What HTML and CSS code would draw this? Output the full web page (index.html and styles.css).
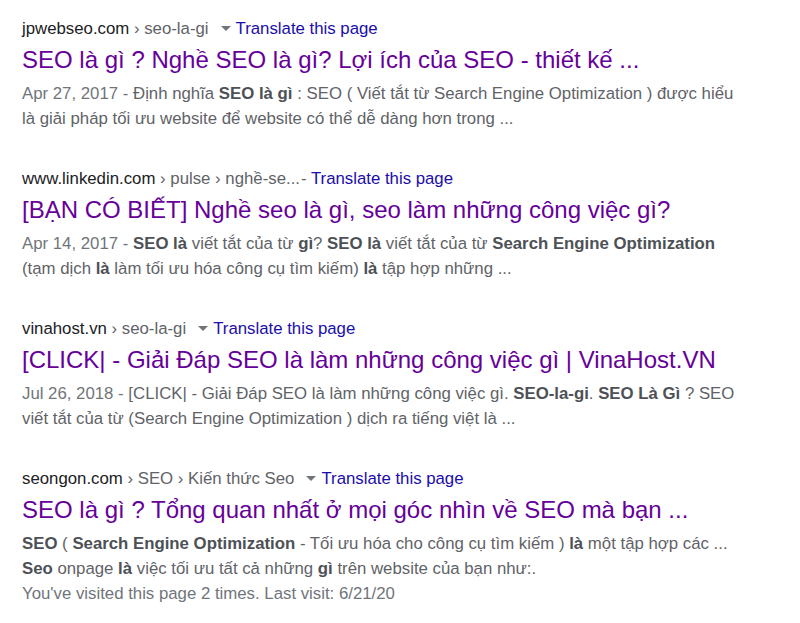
FILE: index.html
```html
<!DOCTYPE html>
<html lang="vi">
<head>
<meta charset="utf-8">
<link rel="stylesheet" href="styles.css">
</head>
<body>
<div class="results">
  <div class="result">
    <div class="cite"><span class="dom">jpwebseo.com</span> <span class="path">› seo-la-gi</span><span class="tri"></span><a class="tr">Translate this page</a></div>
    <a class="title">SEO là gì ? Nghề SEO là gì? Lợi ích của SEO - thiết kế ...</a>
    <div class="snip"><span class="date">Apr 27, 2017 - </span>Định nghĩa <b>SEO là gì</b> : SEO ( Viết tắt từ Search Engine Optimization ) được hiểu<br>là giải pháp tối ưu website để website có thể dễ dàng hơn trong ...</div>
  </div>
  <div class="result">
    <div class="cite"><span class="dom">www.linkedin.com</span> <span class="path">› pulse › nghề-se...</span><span class="dash">- </span><a class="tr">Translate this page</a></div>
    <a class="title">[BẠN CÓ BIẾT] Nghề seo là gì, seo làm những công việc gì?</a>
    <div class="snip"><span class="date">Apr 14, 2017 - </span><b>SEO là</b> viết tắt của từ <b>gì</b>? <b>SEO là</b> viết tắt của từ <b>Search Engine Optimization</b><br>(tạm dịch <b>là</b> làm tối ưu hóa công cụ tìm kiếm) <b>là</b> tập hợp những ...</div>
  </div>
  <div class="result">
    <div class="cite"><span class="dom">vinahost.vn</span> <span class="path">› seo-la-gi</span><span class="tri"></span><a class="tr">Translate this page</a></div>
    <a class="title">[CLICK| - Giải Đáp SEO là làm những công việc gì | VinaHost.VN</a>
    <div class="snip"><span class="date">Jul 26, 2018 - </span>[CLICK| - Giải Đáp SEO là làm những công việc gì. <b>SEO-la-gi</b>. <b>SEO Là Gì</b> ? SEO<br>viết tắt của từ (Search Engine Optimization ) dịch ra tiếng việt là ...</div>
  </div>
  <div class="result">
    <div class="cite"><span class="dom">seongon.com</span> <span class="path">› SEO › Kiến thức Seo</span><span class="tri"></span><a class="tr">Translate this page</a></div>
    <a class="title">SEO là gì ? Tổng quan nhất ở mọi góc nhìn về SEO mà bạn ...</a>
    <div class="snip"><b>SEO</b> ( <b>Search Engine Optimization</b> - Tối ưu hóa cho công cụ tìm kiếm ) <b>là</b> một tập hợp các ...<br><b>Seo</b> onpage <b>là</b> việc tối ưu tất cả những <b>gì</b> trên website của bạn như:.</div>
    <div class="visit">You've visited this page 2 times. Last visit: 6/21/20</div>
  </div>
</div>
</body>
</html>
```
FILE: styles.css
```css
html, body {
  margin: 0;
  padding: 0;
  background: #ffffff;
}
body {
  font-family: "Liberation Sans", Arial, sans-serif;
}
.results {
  padding: 17px 0 0 22px;
  display: flex;
  flex-direction: column;
}
.result {
  height: 150px;
  white-space: nowrap;
}
.cite {
  font-size: 16.8px;
  line-height: 24px;
  color: #202124;
}
.path {
  color: #5f6368;
}
.tri {
  display: inline-block;
  width: 0;
  height: 0;
  border-left: 5px solid transparent;
  border-right: 5px solid transparent;
  border-top: 5px solid #70757a;
  margin: 0 5px 0 12px;
  vertical-align: 3px;
}
.dash {
  color: #5f6368;
  margin-left: 1px;
}
.tr {
  color: #1a0dab;
}
.title {
  display: block;
  color: #660099;
  font-size: 24px;
  line-height: 30px;
  margin-top: 4px;
}
.snip {
  font-size: 16.8px;
  line-height: 25px;
  color: #5f6368;
  margin-top: 6px;
}
.snip b {
  color: #4d5156;
}
.date {
  color: #70757a;
}
.visit {
  font-size: 16.8px;
  line-height: 25px;
  color: #70757a;
}
```
